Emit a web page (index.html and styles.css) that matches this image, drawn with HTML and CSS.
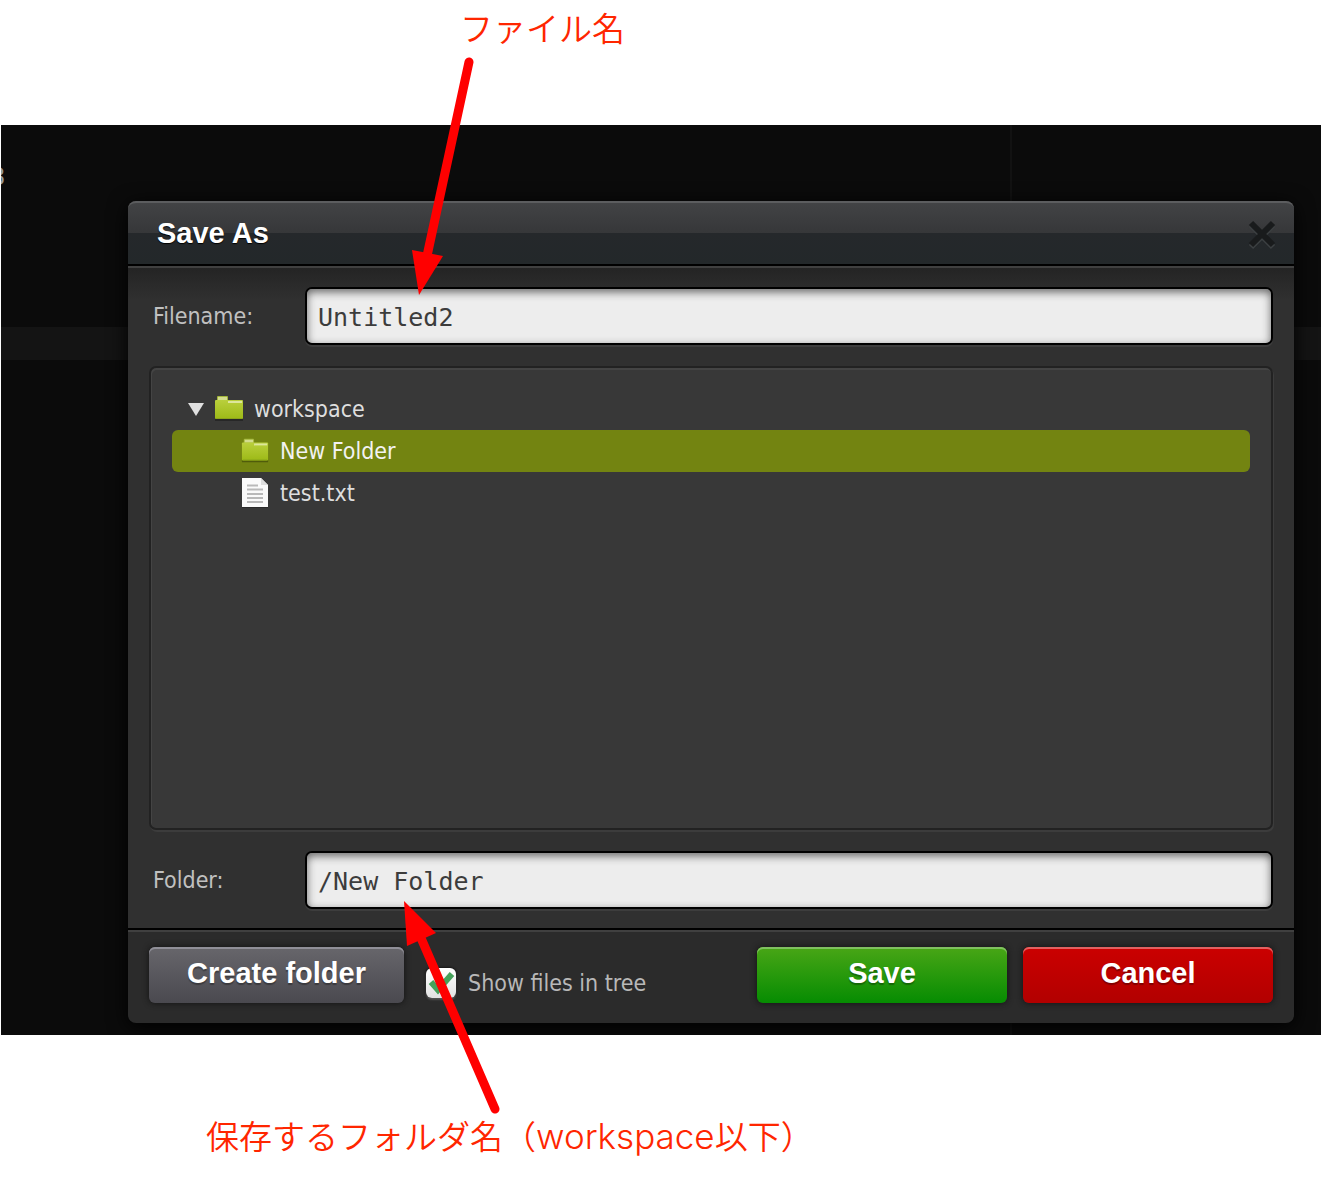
FILE: index.html
```html
<!DOCTYPE html>
<html lang="ja">
<head>
<meta charset="utf-8">
<title>Save As</title>
<link rel="stylesheet" href="styles.css">
</head>
<body>
<main class="figure">
  <p class="note note-top">ファイル名</p>

  <section class="editor">
    <span class="editor-text" aria-hidden="true">3</span>
    <span class="editor-line"></span>
    <span class="editor-margin"></span>

    <form class="dialog" role="dialog" aria-labelledby="dialog-title">
      <header class="dialog-header">
        <h1 class="dialog-title" id="dialog-title">Save As</h1>
        <button class="close" type="button" aria-label="Close">
          <svg width="32" height="32" viewBox="0 0 32 32" fill="none" stroke-width="6">
            <path d="M5 7 27 29M27 7 5 29" stroke="#3c4042"/>
            <path d="M5 5 27 27M27 5 5 27" stroke="#191b1c"/>
          </svg>
        </button>
      </header>

      <div class="dialog-body">
        <div class="field">
          <label class="label" for="filename">Filename:</label>
          <input class="input" id="filename" type="text" value="Untitled2">
        </div>

        <ul class="tree" role="tree">
          <li role="treeitem" aria-expanded="true">
            <div class="row">
              <svg class="twisty" width="16" height="14" viewBox="0 0 16 14"><path d="M0 1H16L8 14Z" fill="#e0e0e0"/></svg>
              <svg class="icon" width="30" height="30" viewBox="0 0 30 30"><use href="#folder"/></svg>
              <span>workspace</span>
            </div>
            <ul class="branch" role="group">
              <li class="row row-child row-selected" role="treeitem" aria-selected="true">
                <svg class="icon" width="30" height="30" viewBox="-1 -1 32 32"><use href="#folder"/></svg>
                <span>New Folder</span>
              </li>
              <li class="row row-child" role="treeitem">
                <svg class="icon" width="30" height="30" viewBox="0 0 30 30">
                  <path d="M2 1H22L28 8V31H2Z" fill="#2a2a2a"/>
                  <path d="M2 0H21L28 7V29H2Z" fill="#fafafa"/>
                  <path d="M21 0V7H28Z" fill="#dedede"/>
                  <path d="M7 7.500H18M7 11.500H23M7 16H23M7 20H23M7 24H23" stroke="#b9b9b9" stroke-width="1.800"/>
                </svg>
                <span>test.txt</span>
              </li>
            </ul>
          </li>
        </ul>

        <div class="field">
          <label class="label" for="folder-path">Folder:</label>
          <input class="input" id="folder-path" type="text" value="/New Folder">
        </div>
      </div>

      <footer class="dialog-footer">
        <button class="button button-gray" type="button">Create folder</button>
        <label class="check"><input class="check-box" type="checkbox" checked>Show files in tree</label>
        <button class="button button-green" type="submit">Save</button>
        <button class="button button-red" type="button">Cancel</button>
      </footer>
    </form>
  </section>

  <p class="note note-bottom">保存するフォルダ名（<span class="latin">workspace</span>以下）</p>

  <svg class="arrow arrow-top" width="70" height="240" viewBox="408 56 70 240" aria-hidden="true">
    <path d="M469 62 427 256" stroke="#f00" stroke-width="9" stroke-linecap="round"/>
    <path d="M412 250 443 256 419 295Z" fill="#f00"/>
  </svg>
  <svg class="arrow arrow-bottom" width="100" height="216" viewBox="402 900 100 216" aria-hidden="true">
    <path d="M495 1109 421 938" stroke="#f00" stroke-width="9" stroke-linecap="round"/>
    <path d="M404 901 436 933 407 946Z" fill="#f00"/>
  </svg>
</main>

<svg class="defs" width="0" height="0" aria-hidden="true">
  <defs>
    <linearGradient id="folder-fill" x1="0" y1="0" x2="0" y2="1">
      <stop offset="0" stop-color="#b9cf3c"/>
      <stop offset="1" stop-color="#9dba17"/>
    </linearGradient>
    <g id="folder">
      <path d="M1 8H29V27H1Z" fill="#000" opacity=".3"/>
      <path d="M3 3Q3 2 4 2H13Q14 2 14 3V8H3Z" fill="#a3b63a"/>
      <path d="M4 3H13V6H4Z" fill="#d3dc8e"/>
      <path d="M1 7Q1 6 2 6H28Q29 6 29 7V24Q29 25 28 25H2Q1 25 1 24Z" fill="url(#folder-fill)"/>
      <path d="M14 8H28" stroke="#dde69c" stroke-width="2"/>
      <path d="M2 24.500H28" stroke="#8ca51a"/>
    </g>
  </defs>
</svg>
</body>
</html>
```
FILE: styles.css
```css
* {
  box-sizing: border-box;
}

body {
  margin: 0;
  background: #fff;
}

.figure {
  position: relative;
  padding: 0 1px;
}

.note {
  margin: 0;
  color: #ff2600;
  font: 350 33px/48px "Noto Sans CJK JP", sans-serif;
}

.note-top {
  height: 125px;
  padding: 3px 0 0 459px;
}

.note-bottom {
  height: 146px;
  padding: 76px 0 0 205px;
}

.latin {
  font-family: Inter, sans-serif;
  font-size: 35px;
  font-weight: 300;
  line-height: 1;
}

.editor {
  position: relative;
  overflow: hidden;
  padding: 76px 27px 12px 127px;
  background: #0b0b0b;
}

.editor-text {
  position: absolute;
  top: 38px;
  left: -10px;
  color: #999;
  font: 24px/28px "DejaVu Sans Mono", monospace;
}

.editor-line {
  position: absolute;
  top: 202px;
  right: 0;
  left: 0;
  height: 33px;
  background: #141414;
}

.editor-margin {
  position: absolute;
  top: 0;
  right: 309px;
  bottom: 0;
  width: 2px;
  background: #121212;
}

.dialog {
  position: relative;
  border-radius: 8px;
  background: #2b2b2b;
  box-shadow: 0 4px 20px #000;
  font-family: "DejaVu Sans Condensed", "DejaVu Sans", sans-serif;
}

.dialog-header {
  display: flex;
  align-items: center;
  justify-content: space-between;
  height: 65px;
  padding: 0 16px 0 29px;
  border-top: 2px solid #5c5d5f;
  border-bottom: 2px solid #000;
  border-radius: 8px 8px 0 0;
  background: linear-gradient(#424345, #363739 30px, #25282b 30px, #23282a);
}

.dialog-title {
  margin: 0;
  padding-bottom: 2px;
  color: #fff;
  font: bold 29px/36px "Liberation Sans", sans-serif;
  text-shadow: 0 1px 1px #000;
}

.close {
  display: flex;
  padding: 0;
  border: 0;
  background: none;
}

.dialog-body {
  display: grid;
  gap: 21px;
  padding: 19px 21px;
  border-top: 2px solid #404040;
  border-bottom: 2px solid #000;
  background: linear-gradient(#242424, #303030 32px);
}

.field {
  display: grid;
  grid-template-columns: 152px 1fr;
  align-items: center;
  padding-left: 4px;
}

.label {
  color: #c0c0c0;
  font-size: 23px;
}

.input {
  width: 100%;
  height: 58px;
  padding: 2px 11px 0;
  border: 2px solid #000;
  border-radius: 7px;
  background: #ededed;
  box-shadow: inset 0 3px 8px #666, 0 2px 0 #3d3d3d;
  color: #3c3c3c;
  font: 25px "DejaVu Sans Mono", monospace;
}

.tree {
  min-height: 464px;
  margin: 0;
  padding: 20px 21px;
  border: 2px solid #222;
  border-radius: 7px;
  background: #383838;
  box-shadow: inset 1px 2px 0 #444, 1px 2px 0 #3c3c3c;
  color: #dedede;
  font-size: 23px;
  list-style: none;
}

.branch {
  margin: 0;
  padding: 0;
  list-style: none;
}

.row {
  display: flex;
  align-items: center;
  gap: 10px;
  height: 42px;
  padding-left: 16px;
  border-radius: 6px;
}

.row-child {
  padding-left: 68px;
}

.row-selected {
  background: #738411;
  color: #f2f2f2;
}

.dialog-footer {
  display: flex;
  align-items: flex-end;
  gap: 16px;
  padding: 15px 21px 20px;
  border-top: 2px solid #404040;
  border-radius: 0 0 8px 8px;
}

.button {
  width: 250px;
  height: 56px;
  padding: 0 0 5px;
  border: 0;
  border-radius: 6px;
  color: #fff;
  font: bold 29px/36px "Liberation Sans", sans-serif;
  text-shadow: 0 2px 1px rgba(0, 0, 0, .3);
}

.button-gray {
  width: 255px;
  background: linear-gradient(#67666b, #4a494f);
  box-shadow: inset 0 2px 0 #908f98, 0 0 6px #111;
}

.button-green {
  background: linear-gradient(#49a616, #068c02);
  box-shadow: inset 0 2px 0 #80c160, 0 0 6px #111;
}

.button-red {
  background: linear-gradient(#cb0000, #b20000);
  box-shadow: inset 0 2px 0 #e26060, 0 0 6px #111;
}

.check {
  display: flex;
  flex: 1;
  align-items: center;
  gap: 12px;
  padding: 0 0 5px 6px;
  color: #b8b8b8;
  font-size: 23px;
}

.check-box {
  appearance: none;
  width: 30px;
  height: 30px;
  margin: 0;
  border-radius: 6px;
  background: url("data:image/svg+xml,%3Csvg xmlns='http://www.w3.org/2000/svg' viewBox='0 0 30 30'%3E%3Cpath d='M5 14L12 22L26 6' fill='none' stroke='%2345a15a' stroke-width='6'/%3E%3C/svg%3E"), linear-gradient(#fff, #e2e2e2);
  box-shadow: 0 2px 2px #555, 0 0 3px #000;
}

.arrow {
  position: absolute;
  pointer-events: none;
}

.arrow-top {
  top: 56px;
  left: 408px;
}

.arrow-bottom {
  top: 900px;
  left: 402px;
}

.defs {
  position: absolute;
}
```
